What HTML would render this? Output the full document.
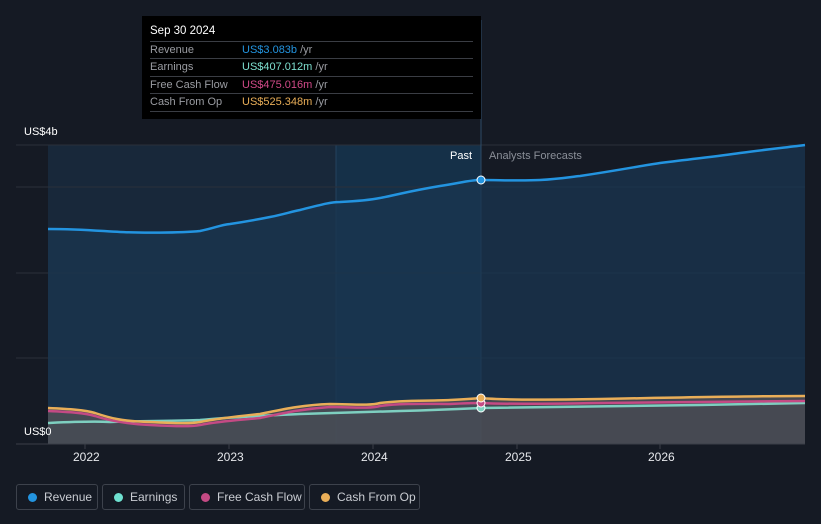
<!DOCTYPE html><html><head><style>
body{margin:0;background:#151a24;width:821px;height:524px;overflow:hidden;font-family:"Liberation Sans",sans-serif;position:relative}
.tt{position:absolute;left:142px;top:16px;width:339px;height:103px;background:#000;color:#fff;font-size:11px}
.tt .h{position:absolute;left:8px;top:9px;font-size:11.5px}
.tt .r{position:absolute;left:8px;right:8px;height:17px;border-top:1px solid #3a3d44;color:#9a9ca2;line-height:17px}
.tt .r span{position:absolute;left:92px}
.lg{position:absolute;top:484px;height:26px;border:1px solid #3d424c;border-radius:3px;color:#c9ccd2;font-size:12px;line-height:26px;box-sizing:border-box}
.lg i{position:absolute;left:11px;top:8px;width:9px;height:9px;border-radius:50%}
.lg b{font-weight:normal;position:absolute;left:27px;top:-1px}
.ax{position:absolute;top:450px;color:#e6e8ec;font-size:12px}
</style></head><body>
<svg width="821" height="524" style="position:absolute;left:0;top:0">
<defs><linearGradient id="g" x1="0" y1="0" x2="0" y2="1"><stop offset="0" stop-color="#1d4060" stop-opacity=".9"/><stop offset="1" stop-color="#1a2a3c" stop-opacity=".9"/></linearGradient></defs>
<rect x="48" y="145" width="433" height="299" fill="#18283a"/>
<rect x="336" y="145" width="145" height="299" fill="#153048"/>
<line x1="336" y1="145" x2="336" y2="444" stroke="#24425e"/>
<g stroke="#2a303a" stroke-width="1"><line x1="16" y1="145" x2="805" y2="145"/><line x1="16" y1="187" x2="805" y2="187"/><line x1="16" y1="273" x2="805" y2="273"/><line x1="16" y1="358" x2="805" y2="358"/></g>
<line x1="481" y1="20" x2="481" y2="444" stroke="#2d4a66"/>
<path d="M48,229 C80,229 100,231 120,232 C140,233 180,233 200,231 C215,228 220,225 230,224 C250,221 260,219 270,217 C285,214 290,212 300,210 C320,205 330,202 340,202 C360,201 370,200 380,198 C400,194 410,191 440,186 C460,183 470,180 480,180 C500,180 520,181 540,180 C560,179 570,177 580,176 C620,170 640,166 660,163 C700,158 720,156 740,153 C770,149 790,147 805,145 L805,444 L48,444Z" fill="#1a3650" opacity=".75"/>
<path d="M48,229 C80,229 100,231 120,232 C140,233 180,233 200,231 C215,228 220,225 230,224 C250,221 260,219 270,217 C285,214 290,212 300,210 C320,205 330,202 340,202 C360,201 370,200 380,198 C400,194 410,191 440,186 C460,183 470,180 480,180 C500,180 520,181 540,180 C560,179 570,177 580,176 C620,170 640,166 660,163 C700,158 720,156 740,153 C770,149 790,147 805,145" fill="none" stroke="#2394e0" stroke-width="2.5"/>
<path d="M48,408 C70,409 85,410 95,413 C110,418 120,421 150,422 C170,423 190,424 200,422 C220,418 240,416 260,414 C280,410 300,405 330,404 C350,404 370,406 380,403 C400,400 430,401 450,400 C470,399 481,398 481,398 C500,400 540,400 600,399 C700,397 760,396 805,396 L805,444 L48,444Z" fill="#5a5558" opacity=".7"/>
<path d="M48,423 C70,422 90,421 110,422 C140,421 180,421 200,420 C230,417 260,416 300,414 C340,413 370,412 400,411 C440,410 460,409 481,408 C520,408 600,407 700,405 C760,404 790,403 805,403" fill="none" stroke="#7ecfc0" stroke-width="2.5"/>
<path d="M48,411 C70,412 85,413 95,416 C110,421 130,424 150,425 C170,426 190,427 200,425 C220,421 240,420 260,418 C280,414 300,409 330,407 C350,407 370,409 380,406 C400,403 430,404 450,404 C470,403 481,403 481,403 C500,404 540,404 600,403 C700,402 760,401 805,401" fill="none" stroke="#c44a84" stroke-width="2.5"/>
<path d="M48,408 C70,409 85,410 95,413 C110,418 120,421 150,422 C170,423 190,424 200,422 C220,418 240,416 260,414 C280,410 300,405 330,404 C350,404 370,406 380,403 C400,400 430,401 450,400 C470,399 481,398 481,398 C500,400 540,400 600,399 C700,397 760,396 805,396" fill="none" stroke="#e9ae58" stroke-width="2.5"/>
<line x1="16" y1="444" x2="805" y2="444" stroke="#3a3f48"/>
<g stroke="#3a3f48"><line x1="85" y1="444" x2="85" y2="449"/><line x1="229" y1="444" x2="229" y2="449"/><line x1="373" y1="444" x2="373" y2="449"/><line x1="517" y1="444" x2="517" y2="449"/><line x1="660" y1="444" x2="660" y2="449"/></g>
<circle cx="481" cy="180" r="4" fill="#2394e0" stroke="#fff" stroke-width="1"/>
<circle cx="481" cy="408" r="4" fill="#7ecfc0" stroke="#fff" stroke-width="1"/>
<circle cx="481" cy="403" r="4" fill="#c44a84" stroke="#fff" stroke-width="1"/>
<circle cx="481" cy="398" r="4" fill="#e9ae58" stroke="#fff" stroke-width="1"/>
</svg>
<div style="position:absolute;left:24px;top:126px;color:#fff;font-size:11px">US$4b</div>
<div style="position:absolute;left:24px;top:426px;color:#fff;font-size:11px">US$0</div>
<div style="position:absolute;left:450px;top:150px;color:#fff;font-size:11px">Past</div>
<div style="position:absolute;left:489px;top:150px;color:#8a8f98;font-size:11px">Analysts Forecasts</div>
<div class="ax" style="left:73px">2022</div><div class="ax" style="left:217px">2023</div><div class="ax" style="left:361px">2024</div><div class="ax" style="left:505px">2025</div><div class="ax" style="left:648px">2026</div>
<div class="tt"><div class="h">Sep 30 2024</div>
<div class="r" style="top:25px">Revenue<span><b style="font-weight:normal;color:#2394e0">US$3.083b</b> /yr</span></div>
<div class="r" style="top:42px">Earnings<span><b style="font-weight:normal;color:#7ee0d0">US$407.012m</b> /yr</span></div>
<div class="r" style="top:60px">Free Cash Flow<span><b style="font-weight:normal;color:#d04a88">US$475.016m</b> /yr</span></div>
<div class="r" style="top:77px;border-bottom:1px solid #3a3d44">Cash From Op<span><b style="font-weight:normal;color:#e9ae58">US$525.348m</b> /yr</span></div>
</div>
<div class="lg" style="left:16px;width:82px"><i style="background:#2394e0"></i><b>Revenue</b></div>
<div class="lg" style="left:102px;width:83px"><i style="background:#6ee0d0"></i><b>Earnings</b></div>
<div class="lg" style="left:189px;width:116px"><i style="background:#c44a84"></i><b>Free Cash Flow</b></div>
<div class="lg" style="left:309px;width:111px"><i style="background:#e9ae58"></i><b>Cash From Op</b></div>
</body></html>
